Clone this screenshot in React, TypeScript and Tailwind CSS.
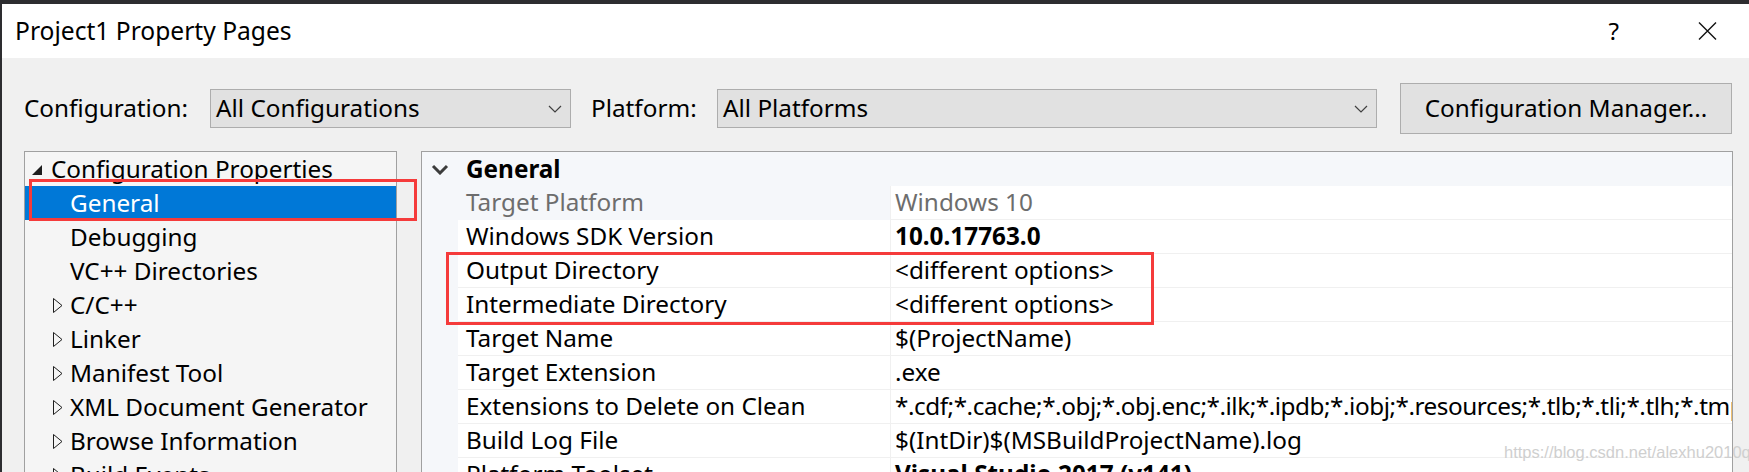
import React from "react";

const treeItems: { label: string; depth: number; toggle: "open" | "closed" | "none"; selected?: boolean }[] = [
  { label: "Configuration Properties", depth: 0, toggle: "open" },
  { label: "General", depth: 1, toggle: "none", selected: true },
  { label: "Debugging", depth: 1, toggle: "none" },
  { label: "VC++ Directories", depth: 1, toggle: "none" },
  { label: "C/C++", depth: 1, toggle: "closed" },
  { label: "Linker", depth: 1, toggle: "closed" },
  { label: "Manifest Tool", depth: 1, toggle: "closed" },
  { label: "XML Document Generator", depth: 1, toggle: "closed" },
  { label: "Browse Information", depth: 1, toggle: "closed" },
  { label: "Build Events", depth: 1, toggle: "closed" },
];

const props: { name: string; value: string; readOnly?: boolean; bold?: boolean; tight?: boolean }[] = [
  { name: "Target Platform", value: "Windows 10", readOnly: true },
  { name: "Windows SDK Version", value: "10.0.17763.0", bold: true },
  { name: "Output Directory", value: "<different options>" },
  { name: "Intermediate Directory", value: "<different options>" },
  { name: "Target Name", value: "$(ProjectName)" },
  { name: "Target Extension", value: ".exe" },
  {
    name: "Extensions to Delete on Clean",
    value:
      "*.cdf;*.cache;*.obj;*.obj.enc;*.ilk;*.ipdb;*.iobj;*.resources;*.tlb;*.tli;*.tlh;*.tmp;*.rsp;*.pgc;*.pgd;*.meta;*.tlog;*.manifest;*.res;*.pch;*.exp;*.idb;*.rep;*.xdc;*.pdb;*_manifest.rc;*.bsc;*.sbr;*.xml;*.metagen;*.bi",
    tight: true,
  },
  { name: "Build Log File", value: "$(IntDir)$(MSBuildProjectName).log" },
  { name: "Platform Toolset", value: "Visual Studio 2017 (v141)", bold: true },
];

function Chevron({ className = "" }: { className?: string }) {
  return (
    <svg width="14" height="8" viewBox="0 0 14 8" className={className}>
      <path d="M1 1 L7 7 L13 1" fill="none" stroke="#404040" strokeWidth="1.2" />
    </svg>
  );
}

function Dropdown({ value, width }: { value: string; width: string }) {
  return (
    <div className={`${width} h-[39px] flex items-center bg-[#e1e1e1] border border-[#adadad] pl-[5px] pr-[8px]`}>
      <span className="flex-1 whitespace-nowrap">{value}</span>
      <Chevron />
    </div>
  );
}

function TreeToggle({ kind }: { kind: "open" | "closed" }) {
  if (kind === "open") {
    return (
      <svg width="10" height="10" viewBox="0 0 10 10" className="mt-[2px]">
        <polygon points="10,0 10,10 0,10" fill="#1e1e1e" />
      </svg>
    );
  }
  return (
    <svg width="10" height="15" viewBox="0 0 10 15">
      <polygon points="0.5,0.5 9,7.5 0.5,14.5" fill="none" stroke="#1e1e1e" strokeWidth="1" />
    </svg>
  );
}

export default function App() {
  return (
    <div className="relative w-[1749px] h-[472px] overflow-hidden bg-[#f0f0f0] text-[24.3px] text-black font-['Noto_Sans',sans-serif] border-l-2 border-[#2d2d30]">
      {/* strip of the IDE behind the dialog */}
      <div className="h-[4px] bg-[#2d2d30]" />

      {/* title bar */}
      <div className="h-[54px] bg-white flex items-center pl-[13px] pr-[32px]">
        <span className="flex-1 leading-none text-[24.6px]">Project1 Property Pages</span>
        <span className="leading-none">?</span>
        <svg width="19" height="18" viewBox="0 0 19 18" className="ml-[79px]">
          <path d="M1 0.5 L18 17.5 M18 0.5 L1 17.5" stroke="#111" strokeWidth="1.4" />
        </svg>
      </div>

      {/* configuration toolbar */}
      <div className="h-[93px] pt-[25px] pl-[22px] flex items-start">
        <div className="h-[51px] flex items-center">
          <span className="w-[186px] whitespace-nowrap">Configuration:</span>
          <Dropdown value="All Configurations" width="w-[361px]" />
          <span className="ml-[20px] w-[126px] whitespace-nowrap">Platform:</span>
          <Dropdown value="All Platforms" width="w-[660px]" />
          <button className="ml-[23px] w-[332px] h-[51px] bg-[#e1e1e1] border border-[#adadad] whitespace-nowrap">
            Configuration Manager...
          </button>
        </div>
      </div>

      {/* panels */}
      <div className="flex pl-[22px]">
        <div className="w-[373px] h-[340px] border border-[#a0a0a0] bg-[#f5f5f5] overflow-hidden">
          {treeItems.map((item) => (
            <div
              key={item.label}
              className={`h-[34px] flex items-center whitespace-nowrap ${item.selected ? "bg-[#0078d7] text-white" : ""}`}
            >
              {item.depth === 0 ? (
                <div className="w-[26px] pl-[7px] flex items-center">
                  <TreeToggle kind="open" />
                </div>
              ) : (
                <div className="w-[45px] pl-[28px] flex items-center">
                  {item.toggle === "closed" && <TreeToggle kind="closed" />}
                </div>
              )}
              <span>{item.label}</span>
            </div>
          ))}
        </div>

        <div className="ml-[24px] w-[1312px] h-[340px] border border-[#a0a0a0] bg-[#f5f7fa] overflow-hidden">
          <div className="h-[34px] flex items-center">
            <svg width="18" height="11" viewBox="0 0 18 11" className="ml-[9px]">
              <path d="M2 2 L9 9 L16 2" fill="none" stroke="#3c3c3c" strokeWidth="3" />
            </svg>
            <span className="ml-[17px] font-bold">General</span>
          </div>
          {props.map((p) => (
            <div key={p.name} className="h-[34px] flex whitespace-nowrap">
              <div className="w-[36px] shrink-0" />
              <div
                className={`w-[432px] shrink-0 pl-[8px] flex items-center border-b ${
                  p.readOnly ? "text-[#6d6d6d] border-transparent" : "bg-white border-[#f0f0f0]"
                }`}
              >
                {p.name}
              </div>
              <div
                className={`flex-1 min-w-0 overflow-hidden pl-[4px] flex items-center bg-white border-b border-l border-[#f0f0f0] ${
                  p.readOnly ? "text-[#6d6d6d]" : ""
                } ${p.bold ? "font-bold" : ""} ${p.tight ? "tracking-[-0.45px]" : ""}`}
              >
                {p.value}
              </div>
            </div>
          ))}
        </div>
      </div>

      {/* annotation boxes */}
      <div className="absolute left-[27px] top-[179px] w-[388px] h-[42px] border-[3px] border-[#f53b3b]" />
      <div className="absolute left-[444px] top-[252px] w-[708px] h-[73px] border-[3px] border-[#f53b3b]" />

      {/* watermark */}
      <div className="absolute left-[1502px] top-[440px] text-[16.5px] text-[#cfcfcf] font-['Liberation_Sans',Arial,sans-serif] whitespace-nowrap">
        https://blog.csdn.net/alexhu2010q
      </div>
    </div>
  );
}
